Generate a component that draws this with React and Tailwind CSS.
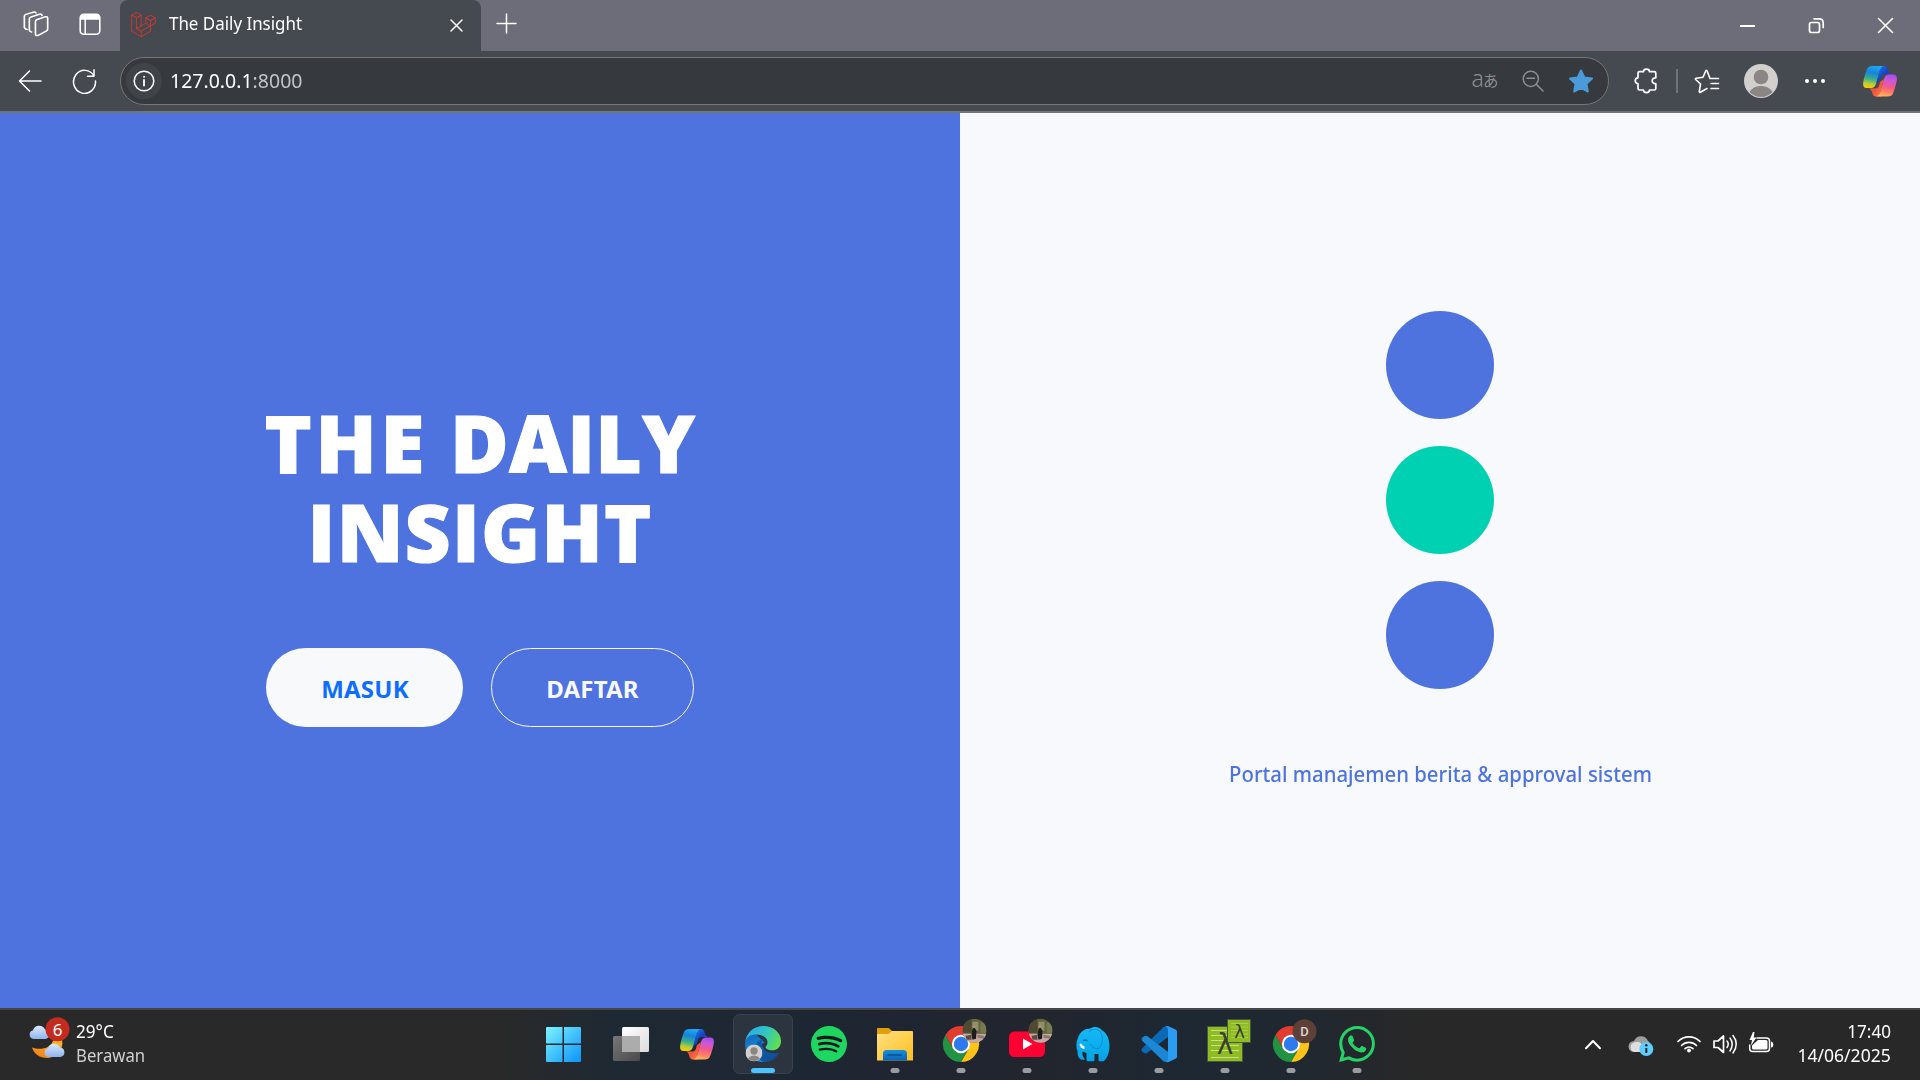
import React from 'react';
import { SiLaravel, SiSpotify, SiWhatsapp } from 'react-icons/si';

const stroke = { fill: 'none', stroke: '#fff', strokeWidth: 1.5, strokeLinecap: 'round', strokeLinejoin: 'round' };

function CopilotLogo({ id, ...rest }) {
  const ribbon = 'M9.5 0H21C18 .6 17 3 16 7L13 17.500C12 21 10.500 22 8 22H3.500C.8 22-.3 19.800.2 16.500C1 11.500 2.500 7 3.600 4C4.700 1 6.500 0 9.500 0Z';
  const fold = 'M15 0H21C23.600 0 24.300 1.700 24.900 4C25.500 6.800 26.500 8 29 8H22C19.500 8 18.600 9 18 11L17 14.500L13 17.500L16 7C17 3 17.500 0 15 0Z';
  return (
    <svg width="34" height="31" viewBox="0 0 34 31" {...rest}>
      <defs>
        <linearGradient id={id + 'a'} x1=".5" y1="0" x2=".3" y2="1">
          <stop offset="0" stopColor="#1fa8f4" />
          <stop offset=".3" stopColor="#1583dc" />
          <stop offset=".6" stopColor="#3fb08a" />
          <stop offset=".82" stopColor="#b9cf35" />
          <stop offset="1" stopColor="#ffc800" />
        </linearGradient>
        <linearGradient id={id + 'b'} x1=".3" y1="1" x2=".5" y2="0">
          <stop offset="0" stopColor="#a44df0" />
          <stop offset=".25" stopColor="#c858d8" />
          <stop offset=".55" stopColor="#f3588c" />
          <stop offset=".8" stopColor="#ff8163" />
          <stop offset="1" stopColor="#ffb15a" />
        </linearGradient>
        <linearGradient id={id + 'c'} x1="0" y1="0" x2="1" y2="1">
          <stop offset="0" stopColor="#1b86e8" />
          <stop offset=".5" stopColor="#1741c4" />
          <stop offset="1" stopColor="#2a62dd" />
        </linearGradient>
        <linearGradient id={id + 'd'} x1="0" y1="0" x2="1" y2="1">
          <stop offset="0" stopColor="#ff8c48" />
          <stop offset=".5" stopColor="#f0503c" />
          <stop offset="1" stopColor="#ffa63c" />
        </linearGradient>
      </defs>
      <path d={fold} fill={`url(#${id}c)`} />
      <path d={ribbon} fill={`url(#${id}a)`} />
      <g transform="rotate(180 17 15.300)">
        <path d={fold} fill={`url(#${id}d)`} />
        <path d={ribbon} fill={`url(#${id}b)`} />
      </g>
    </svg>
  );
}

function Avatar({ size, id, ...rest }) {
  return (
    <svg width={size} height={size} viewBox="0 0 34 34" {...rest}>
      <clipPath id={id}><circle cx="17" cy="17" r="16" /></clipPath>
      <circle cx="17" cy="17" r="17" fill="#d2d0ce" />
      <g clipPath={`url(#${id})`} fill="#8b8683">
        <circle cx="17" cy="13" r="7.300" />
        <ellipse cx="17" cy="33" rx="13" ry="11" />
      </g>
    </svg>
  );
}

function TabStrip() {
  return (
    <div className="flex h-[51px] bg-[#6c6d78]">
      <div className="flex w-[120px] shrink-0 items-center pb-[3px]">
        <svg className="ml-[21px] shrink-0" width="30" height="26" viewBox="0 0 27 26" preserveAspectRatio="none" {...stroke}>
          <path d="M14.500 8.500 22 5.800Q24 5.200 24 7.300V18Q24 19.300 23 19.800L15.500 24.300Q13 25.300 13 23V10.500Q13 9 14.500 8.500Z" />
          <path d="M9.500 21Q7.500 20.500 7.500 19V8Q7.500 6.700 9 6L16.500 3.200Q18.500 2.700 19 4.500" />
          <path d="M5.500 18.500Q3 17.800 3 16V5.500Q3 4 4.500 3.400L11 1.200Q13 .8 13.500 2" />
        </svg>
        <svg className="ml-[28px] shrink-0" width="22" height="23" viewBox="0 0 22 23">
          <rect x="1.200" y="1.200" width="19.600" height="20" rx="3.500" {...stroke} strokeWidth="1.600" />
          <path d="M1.200 6.800V4.500Q1.500 1 5 1H17Q20.500 1 20.800 4.500V6.800Z" fill="#fff" />
          <path d="M6.200 6.500V21" {...stroke} />
        </svg>
      </div>
      <div className="flex w-[361px] shrink-0 items-center rounded-t-[8px] bg-[#454950] pr-[18px] pl-[11px]">
        <SiLaravel size={25} color="#e0342c" className="mb-[3px] shrink-0" />
        <span className="mb-[5px] ml-[13px] w-[240px] origin-left scale-x-[0.94] text-[18px] whitespace-nowrap text-white">The Daily Insight</span>
        <svg className="ml-auto shrink-0" width="13" height="13" viewBox="0 0 13 13" {...stroke}><path d="M1 1 12 12M12 1 1 12" /></svg>
      </div>
      <div className="flex items-center pb-[4px] pl-[15px]">
        <svg width="21" height="21" viewBox="0 0 21 21" {...stroke}><path d="M1 10.500H20M10.500 1V20" /></svg>
      </div>
      <div className="ml-auto flex items-center">
        <div className="flex w-[69px] justify-center"><div className="h-[2px] w-[15px] bg-white" /></div>
        <div className="flex w-[69px] justify-center">
          <svg width="17" height="17" viewBox="0 0 17 17" {...stroke} strokeWidth="1.700">
            <rect x="1.500" y="5.500" width="10" height="10" rx="2" />
            <path d="M6 1.800H11Q15.200 1.800 15.200 6V10.500" />
          </svg>
        </div>
        <div className="flex w-[69px] justify-center">
          <svg width="17" height="17" viewBox="0 0 17 17" {...stroke} strokeWidth="1.600"><path d="M1.500 1.500 15.500 15.500M15.500 1.500 1.500 15.500" /></svg>
        </div>
      </div>
    </div>
  );
}

function Toolbar() {
  return (
    <div className="flex h-[62px] items-center border-b-[2px] border-[#73757b] bg-[#454950]">
      <svg className="ml-[18px] shrink-0" width="24" height="22" viewBox="0 0 24 22" {...stroke}><path d="M23 11H1.500M11.500 1 1.500 11 11.500 21" /></svg>
      <svg className="ml-[29px] shrink-0" width="26" height="26" viewBox="0 0 26 26" {...stroke}>
        <path d="M23 8A11 11.500 0 1 0 24.500 13M23 1.800V8.200H16.500" />
      </svg>
      <div className="ml-[23px] flex h-[48px] w-[1489px] shrink-0 items-center rounded-full border border-[#73767b] bg-[#36393e] pr-[3px] pl-[5px]">
        <div className="flex h-[36px] w-[36px] items-center justify-center rounded-full bg-[#404348]">
          <svg width="22" height="22" viewBox="0 0 22 22" {...stroke}>
            <circle cx="11" cy="11" r="9.800" />
            <path d="M11 10V15.500" strokeWidth="1.800" />
            <circle cx="11" cy="6.800" r=".6" fill="#fff" strokeWidth=".8" />
          </svg>
        </div>
        <div className="ml-[8px] origin-left scale-x-[0.975] text-[20px] text-white">127.0.0.1<span className="text-[#c3c4c6]">:8000</span></div>
        <div className="ml-auto flex w-[48px] items-center justify-center leading-none text-[#8c8e91]">
          <span className="mb-[5px] font-['Noto_Sans'] text-[23px] font-light">a</span>
          <span className="mb-[1px] -ml-[1px] font-['Noto_Sans_CJK_JP',sans-serif] text-[15.5px]">あ</span>
        </div>
        <div className="flex w-[48px] justify-center">
          <svg width="22" height="22" viewBox="0 0 22 22" {...stroke} stroke="#8c8e91"><circle cx="8.800" cy="8.800" r="7.600" /><path d="M14.500 14.500 21 21M5 8.300H12.600" /></svg>
        </div>
        <div className="flex w-[48px] justify-center">
          <svg width="26" height="24" viewBox="0 0 26 24" fill="#4a9bd8" stroke="#4a9bd8" strokeWidth="2" strokeLinejoin="round">
            <path d="M13 1.500 16.300 8.400 24 9.500 18.500 14.800 19.800 22.500 13 18.800 6.200 22.500 7.500 14.800 2 9.500 9.700 8.400Z" />
          </svg>
        </div>
      </div>
      <div className="ml-[10px] flex w-[54px] justify-center">
        <svg width="24" height="26" viewBox="0 0 24 26" {...stroke} strokeWidth="1.700">
          <path d="M5.500 3.700H9.500C9.500 .3 15.500 .3 15.500 3.700H20.200Q21.800 3.700 21.800 5.300V9.800C17 9.500 17 16 21.800 15.700V20.500Q21.800 22 20.200 22H15.500C15.500 25.500 9.500 25.500 9.500 22H5.500Q4 22 4 20.500V15.700C.3 15.700.3 10 4 9.800V5.300Q4 3.700 5.500 3.700Z" />
        </svg>
      </div>
      <div className="ml-[3px] h-[24px] w-[2px] bg-[#70737a]" />
      <div className="ml-[2px] flex w-[54px] justify-center">
        <svg width="26" height="25" viewBox="0 0 26 25" {...stroke} strokeWidth="1.600">
          <path d="M16 9.500 13 1.800Q12.400 1 11.800 1.800L9 8.200 2 9.300Q1 9.700 1.700 10.500L6.500 15 5.300 22.500Q5.400 23.700 6.400 23.200L13 19.500M16 9.500H24.500M17 14.500H24.500M17 19.500H24.500" />
        </svg>
      </div>
      <div className="flex w-[54px] justify-center"><Avatar size={34} id="profileClip" /></div>
      <div className="flex w-[54px] items-center justify-center gap-[4px]">
        <i className="h-[4px] w-[4px] rounded-full bg-white" /><i className="h-[4px] w-[4px] rounded-full bg-white" /><i className="h-[4px] w-[4px] rounded-full bg-white" />
      </div>
      <div className="ml-[11px] flex w-[54px] justify-center"><CopilotLogo id="barCopilot" /></div>
    </div>
  );
}

function Page() {
  return (
    <div className="grid h-[895px] grid-cols-2">
      <div className="flex flex-col items-center bg-[#4e73df] pt-[284px]">
        <h1 className="text-center font-['Open_Sans',sans-serif] text-[80px] leading-[89px] font-extrabold tracking-[1.2px] text-white [-webkit-text-stroke:1px_#fff]">
          <span className="tracking-[3.7px]">THE</span> <span className="tracking-[0.2px]">DAILY</span><br />INSIGHT
        </h1>
        <div className="mt-[73px] flex gap-[28px] text-[24px] font-bold tracking-[0.2px]">
          <button className="h-[79px] w-[197px] rounded-full bg-[#f8f9fa] pt-[2px] pl-[1px] text-[#0d6efd]">MASUK</button>
          <button className="h-[79px] w-[203px] rounded-full border border-[#f8f9fa] pt-[2px] text-[#f8f9fa]">DAFTAR</button>
        </div>
      </div>
      <div className="flex flex-col items-center bg-[#f8f9fd] pt-[198px]">
        <div className="flex flex-col gap-[27px]">
          <div className="h-[108px] w-[108px] rounded-full bg-[#4e73df]" />
          <div className="h-[108px] w-[108px] rounded-full bg-[#00d1b2]" />
          <div className="h-[108px] w-[108px] rounded-full bg-[#4e73df]" />
        </div>
        <p className="mt-[67px] scale-x-[0.925] pl-[2px] text-[22px] leading-[34px] font-medium whitespace-nowrap text-[#4e73df]">Portal manajemen berita &amp; approval sistem</p>
      </div>
    </div>
  );
}

function ChromeMark() {
  return (
    <g transform="translate(15 16)">
      <path d="M2.400 9A18 18 0 0 1 33.600 9H18A9 9 0 0 0 10.200 22.500Z" fill="#e33b2e" />
      <path d="M33.600 9A18 18 0 0 1 18 36L25.800 22.500A9 9 0 0 0 18 9Z" fill="#fdc317" />
      <path d="M18 36A18 18 0 0 1 2.400 9L10.200 22.500A9 9 0 0 0 25.800 22.500Z" fill="#229342" />
      <circle cx="18" cy="18" r="9.200" fill="#fff" />
      <circle cx="18" cy="18" r="7.200" fill="#2f79ee" />
    </g>
  );
}

function PhotoBadge({ id }) {
  return (
    <g transform="translate(46.500 20.800)">
      <defs>
        <clipPath id={id}><circle r="12" /></clipPath>
        <filter id={id + 'f'}><feGaussianBlur stdDeviation=".7" /></filter>
      </defs>
      <g clipPath={`url(#${id})`}>
        <rect x="-12" y="-12" width="24" height="24" fill="#65653f" />
        <g filter={`url(#${id}f)`}>
          <rect x="-12" y="-12" width="9" height="14" fill="#4e4a30" />
          <rect x="-2" y="-9" width="6" height="9" fill="#8f9069" />
          <rect x="6" y="-8" width="6" height="10" fill="#767b50" />
          <rect x="-12" y="3" width="24" height="10" fill="#c6a7a2" />
          <path d="M-2-2 0-3 2 0 1.500 8-2 9-3 4Z" fill="#1c1b1b" />
          <path d="M-9 5-3 4-3 9-8 9Z" fill="#5b4a48" />
          <path d="M3 4 9 5 10 8 3 7Z" fill="#8c7772" />
          <circle cx="-.500" cy="-4.500" r="1.400" fill="#b58d76" />
        </g>
      </g>
    </g>
  );
}

function Item({ children, running = true, active, className = 'shrink-0' }) {
  return (
    <svg className={className} width="66" height="70" viewBox="0 0 66 70">
      {active && <rect x="5.500" y="4.500" width="59" height="59" rx="6" fill="#2c353f" stroke="#3a424c" />}
      {children}
      {active && <rect x="23" y="58" width="24" height="5" rx="2.500" fill="#4cc2ff" />}
      {running && !active && <rect x="28.500" y="58" width="9" height="5" rx="2.500" fill="#9a9ca0" />}
    </svg>
  );
}

function TaskItems() {
  return (
    <div className="ml-[386px] flex shrink-0">
      <Item running={false}>
        <defs><linearGradient id="win" gradientUnits="userSpaceOnUse" x1="16" y1="17" x2="51" y2="52"><stop offset="0" stopColor="#7df3ff" /><stop offset="1" stopColor="#0a93fb" /></linearGradient></defs>
        <path d="M17 17H32.500V33.500H16V18Q16 17 17 17ZM34 17H50Q51 17 51 18V33.500H34ZM16 35H32.500V52H17Q16 52 16 51ZM34 35H51V51Q51 52 50 52H34Z" fill="url(#win)" />
      </Item>
      <Item running={false}>
        <defs>
          <linearGradient id="tvw" x1="0" y1="0" x2="1" y2="1"><stop offset="0" stopColor="#fff" /><stop offset="1" stopColor="#dcdcdc" /></linearGradient>
          <linearGradient id="tvg" x1="0" y1="0" x2="1" y2="1"><stop offset="0" stopColor="#777" /><stop offset="1" stopColor="#4a4a4a" /></linearGradient>
        </defs>
        <rect x="17" y="26" width="27" height="25" rx="1.500" fill="url(#tvg)" />
        <rect x="26" y="17" width="27" height="25" rx="1.500" fill="url(#tvw)" />
        <path d="M26 26H44V42H27.500Q26 42 26 40.500Z" fill="#acacac" />
      </Item>
      <Item running={false}><CopilotLogo id="taskCopilot" x="18" y="19" /></Item>
      <Item active>
        <defs>
          <linearGradient id="edT" x1="0" y1=".3" x2="1" y2=".6"><stop offset="0" stopColor="#2fa9e8" /><stop offset=".5" stopColor="#2ec4c6" /><stop offset="1" stopColor="#62e04d" /></linearGradient>
          <linearGradient id="edM" x1="0" y1="0" x2=".4" y2="1"><stop offset="0" stopColor="#1068b8" /><stop offset="1" stopColor="#2292e2" /></linearGradient>
          <linearGradient id="edB" x1="0" y1="0" x2="1" y2="1"><stop offset="0" stopColor="#0c63b5" /><stop offset="1" stopColor="#114a8c" /></linearGradient>
        </defs>
        <g transform="translate(17 16)">
          <path d="M0 18C.8 12 5 8.500 11 8.500L20 17C13 16 11 36 22 35.600 8 38 0 29 0 18Z" fill="url(#edM)" />
          <path d="M11 21C11 15.500 14.500 13 18 13.300C16 16 16.500 20 19 23C22 27.500 29 28 33 26.500Q34.500 26 33.300 28.500C30.500 33 25.500 36 20 36C14 36 11 28 11 21Z" fill="url(#edB)" />
          <path d="M0 17C1 6.500 9 0 18.500 0C28.500 0 36 6.800 36 15C36 21.500 31.500 24.500 27 24.300C23 24.200 20.500 22.800 20.500 21.300C20.500 20.200 22.500 19.500 22.500 16.300C22.500 11.500 17.500 8.500 11 8.500C5 8.500 1.200 12 0 17Z" fill="url(#edT)" />
        </g>
        <Avatar size={17} id="edgeClip" x="17.500" y="34.500" />
      </Item>
      <Item running={false} className="ml-[2px] shrink-0">
        <circle cx="33" cy="34" r="17" fill="#12181d" />
        <SiSpotify x="15" y="16" size={36} color="#1ed760" />
      </Item>
      <Item>
        <defs>
          <linearGradient id="fold" x1="0" y1="0" x2="1" y2="1"><stop offset="0" stopColor="#ffe083" /><stop offset="1" stopColor="#ffbf1c" /></linearGradient>
          <linearGradient id="foldB" x1="0" y1="0" x2="0" y2="1"><stop offset="0" stopColor="#1590dc" /><stop offset="1" stopColor="#0b63b4" /></linearGradient>
        </defs>
        <path d="M15 18.500Q15 18 15.500 18H26Q27 18 28 19L30 21V27H15Z" fill="#dfa00b" />
        <path d="M15 24H26.500L30 21H50Q51 21 51 22V50.500H15Z" fill="url(#fold)" />
        <path d="M21 50.500V43.500Q21 40 24.500 40H41.500Q45 40 45 43.500V50.500Z" fill="url(#foldB)" />
        <rect x="25" y="44.200" width="15" height="1.600" rx=".8" fill="#0a4d94" />
      </Item>
      <Item><ChromeMark /><PhotoBadge id="ph1" /></Item>
      <Item>
        <rect x="15" y="21.500" width="36" height="25.500" rx="5.500" fill="#ff0033" />
        <path d="M29 28.500V39.500L38.500 34Z" fill="#fff" />
        <PhotoBadge id="ph2" />
      </Item>
      <Item>
        <defs><linearGradient id="ele" x1="0" y1="0" x2="0" y2="1"><stop offset="0" stopColor="#16b9f5" /><stop offset="1" stopColor="#04a3e6" /></linearGradient></defs>
        <path d="M25 19.500C27 18.500 29 19 30 18.500C34 15.500 40 17 42 20.500C47 23 49.500 29 49.500 36C49.500 43 47 48 44.500 50.500Q44 51.300 43 51.300H39.500C38.500 51.300 38.500 50 38.500 48.500V44H34.500V49C34.500 51 34 51.300 32.500 51.300H28C26.500 51.300 26.500 50 26.500 48.500V43L22.500 41.500C22 44 23 47.500 25 49.500C20.500 51 17.300 47.500 17.600 42C16 37 16 33 17.500 29C19 24 21.500 21 25 19.500Z" fill="url(#ele)" />
        <path d="M29 22C31 19 36 18.500 39.500 21C43.500 25 43 34 39.500 38C35.500 40 32 37 30.500 34" fill="none" stroke="#0a8fd0" strokeWidth="1" />
        <path d="M19.500 34.500Q20.500 38.500 24.500 39V36.500Q22 35.500 21 33.500Z" fill="#fff" />
        <path d="M23 31Q25 29 27.500 31" fill="none" stroke="#0674b4" strokeWidth="1.200" />
      </Item>
      <Item>
        <path d="M42 16.500V52L37.500 51.500 16 30.500Q14.800 29 16 27.500L18.500 26Q20 25.300 21.300 26.300L42 42Z" fill="#1478c0" />
        <path d="M42 16.500 37.500 17 16 38.500Q14.800 40 16 41.500L18.500 43.200Q20 43.800 21.300 42.800L42 27Z" fill="#0a6ab5" />
        <path d="M21.300 26.300 42 42V51.500L38 51 16 30.500 18.500 26.500Z" fill="#1c87d2" />
        <path d="M42.500 16.300 50 19.700Q51 20.200 51 21.500V46.800Q51 48 50 48.500L42.500 52Q40.500 52.600 39 51.200C41 52 42 50.500 42 49V19.500C42 17.500 40.500 16.300 38.500 17.300Q40.500 15.500 42.500 16.300Z" fill="#2a9df0" />
      </Item>
      <Item>
        <rect x="15.500" y="16.500" width="35" height="35" fill="#8fbc21" stroke="#4c5340" />
        <path d="M19 20.500H47M19 25.500H47M19 30.500H47M19 35.500H47M19 40.500H47M19 47.500H47" stroke="#c9df8c" strokeWidth="1" />
        <text x="33" y="44" fontFamily="DejaVu Sans, sans-serif" fontSize="28" fill="#37402a" textAnchor="middle">λ</text>
        <rect x="35.500" y="9.500" width="23" height="23" fill="#8fbc21" stroke="#4c5340" />
        <path d="M39 13.500H56M39 17H56M39 20.500H56M39 24H56M39 27.500H56" stroke="#b4d268" strokeWidth=".8" />
        <text x="47.500" y="27.500" fontFamily="DejaVu Sans, sans-serif" fontSize="18" fill="#37402a" textAnchor="middle">λ</text>
      </Item>
      <Item>
        <ChromeMark />
        <circle cx="46.500" cy="21.300" r="12" fill="#5d4037" />
        <text x="46.500" y="25.800" fontFamily="Roboto, sans-serif" fontSize="13" fontWeight="500" fill="#ddd5d1" textAnchor="middle">D</text>
      </Item>
      <Item><SiWhatsapp x="15" y="16" size={36} color="#25d366" /></Item>
    </div>
  );
}

function Cloud({ fill, ...rest }) {
  return (
    <svg width="22" height="14" viewBox="0 0 22 14" {...rest}>
      <path d="M5 14A4.500 4.500 0 0 1 4.500 5.200A6.500 6.500 0 0 1 16.500 4.500A4.800 4.800 0 0 1 17 14Z" fill={fill} />
    </svg>
  );
}

function Taskbar() {
  return (
    <div className="flex h-[72px] border-t-[2px] border-[#454648] bg-[linear-gradient(90deg,#292929_0,#292929_500px,#1f2933_610px,#1d2633_800px,#22252e_1030px,#1e2832_1160px,#1f2831_1290px,#282828_1420px,#282828_100%)]">
      <div className="flex w-[144px] shrink-0">
        <svg className="shrink-0" width="72" height="70" viewBox="0 0 72 70">
          <defs>
            <linearGradient id="cl" x1="0" y1="0" x2="0" y2="1"><stop offset="0" stopColor="#d9e9ff" /><stop offset="1" stopColor="#8fb3ec" /></linearGradient>
            <linearGradient id="mn" x1="0" y1="1" x2="1" y2="0"><stop offset="0" stopColor="#f07a16" /><stop offset="1" stopColor="#fdb92a" /></linearGradient>
          </defs>
          <path d="M62 30C64 39 57 48 47 48C40 48 34 44 32 37.500C40 40.500 51 38.500 53 30.500Z" fill="url(#mn)" />
          <Cloud fill="url(#cl)" x="28.500" y="15" />
          <Cloud fill="url(#cl)" x="43.500" y="33" />
          <circle cx="57.500" cy="19.300" r="12" fill="#c42b1f" />
          <text x="57.500" y="25.500" fontFamily="Noto Sans, sans-serif" fontSize="17" fill="#fff" textAnchor="middle">6</text>
        </svg>
        <div className="ml-[4px] flex w-[80px] shrink-0 flex-col items-start pt-[9px] leading-[24px] whitespace-nowrap">
          <span className="origin-left scale-x-[0.95] text-[18px] text-white">29°C</span>
          <span className="origin-left scale-x-[0.93] text-[18px] text-[#cfcfcf]">Berawan</span>
        </div>
      </div>
      <TaskItems />
      <svg className="ml-auto shrink-0" width="200" height="70" viewBox="1580 0 200 70">
        <path d="M1586 38.200 1593 31 1600 38.200" {...stroke} strokeWidth="2" />
        <g>
          <path d="M1634 42A5.500 5.500 0 0 1 1634 31A7.500 7.500 0 0 1 1648 31Q1652 33 1650 42Z" fill="#9d9d9d" />
          <path d="M1634 42A5 5 0 0 1 1634 32.500Q1640 30 1643 36L1640 42Z" fill="#dedede" />
          <circle cx="1646.300" cy="39" r="7" fill="#60cdff" />
          <path d="M1646.300 38V43" stroke="#16242d" strokeWidth="2" />
          <circle cx="1646.300" cy="35.300" r="1.200" fill="#16242d" />
        </g>
        <g {...stroke} strokeWidth="1.700">
          <path d="M1678 31.500A15.500 15.500 0 0 1 1700 31.500M1681.500 35.500A10.500 10.500 0 0 1 1696.500 35.500M1685 38.700A6 6 0 0 1 1693 38.700" />
          <circle cx="1689" cy="40.500" r="1.600" fill="#fff" strokeWidth=".8" />
          <path d="M1714 31H1718L1723.500 26V42.500L1718 37.500H1714Z" />
          <path d="M1727 31Q1729.500 34 1727 37.500M1730 28Q1734.500 34 1730 41M1733 25.500Q1739.500 34 1733 43" strokeWidth="1.500" />
          <path d="M1757 28H1766.500Q1769.500 28 1769.500 31V38.500Q1769.500 41.500 1766.500 41.500H1752.500Q1749.700 41.500 1749.700 38.500V35" strokeWidth="1.500" />
        </g>
        <path d="M1758 30H1766Q1767.500 30 1767.500 31.500V38Q1767.500 39.500 1766 39.500H1753.500Q1752 39.500 1752 38V35.500Z" fill="#fff" />
        <path d="M1771 31.500Q1773.300 32 1773.300 34.800T1771 37.500Z" fill="#fff" />
        <path d="M1753 22 1749.500 30H1752L1751 35.500 1756.500 27.500H1753.700L1754.500 22Z" fill="#fff" />
      </svg>
      <div className="flex w-[140px] shrink-0 flex-col items-end pt-[9px] pr-[29px] text-[18px] leading-[24px] text-white">
        <span className="origin-right scale-x-[0.95]">17:40</span>
        <span className="origin-right scale-x-[0.975]">14/06/2025</span>
      </div>
    </div>
  );
}

export default function App() {
  return (
    <div className="h-[1080px] w-[1920px] overflow-hidden font-['Noto_Sans',sans-serif]">
      <TabStrip />
      <Toolbar />
      <Page />
      <Taskbar />
    </div>
  );
}
